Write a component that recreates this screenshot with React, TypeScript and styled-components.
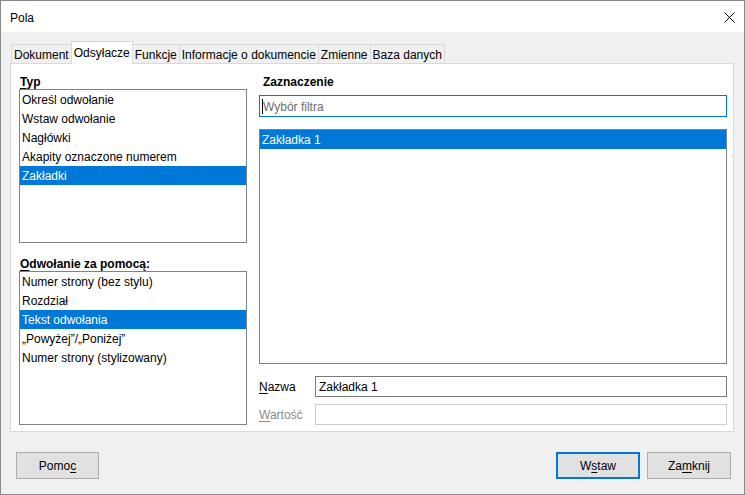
import styled, { createGlobalStyle } from "styled-components";

const Global = createGlobalStyle`
  html, body {
    margin: 0;
    padding: 0;
    background: #ffffff;
  }
  * {
    box-sizing: border-box;
  }
  body {
    font-family: "Liberation Sans", Arial, sans-serif;
    font-size: 12px;
    color: #000;
  }
`;

const Window = styled.div`
  width: 745px;
  height: 495px;
  border: 1px solid #8a8a8a;
  display: flex;
  flex-direction: column;
  background: #f0f0f0;
`;

const TitleBar = styled.div`
  height: 31px;
  flex: 0 0 31px;
  background: #fff;
  display: flex;
  align-items: center;
  justify-content: space-between;
  padding: 2px 9px 0 9px;
  font-size: 12px;
`;

const CloseIcon = styled.svg`
  width: 11px;
  height: 11px;
  margin-top: -1px;
`;

const Body = styled.div`
  flex: 1;
  display: flex;
  flex-direction: column;
  padding: 9px 10px 0 9px;
`;

const TabStrip = styled.div`
  display: flex;
  align-items: flex-end;
  height: 22px;
  padding-left: 1px;
  position: relative;
  z-index: 1;
`;

const Tab = styled.div<{ $active?: boolean }>`
  height: ${(p) => (p.$active ? "23px" : "19px")};
  margin-bottom: ${(p) => (p.$active ? "-1px" : "0")};
  padding: 0 2px 0 2px;
  margin-right: -1px;
  display: flex;
  align-items: center;
  padding-top: ${(p) => (p.$active ? "0" : "1px")};
  background: ${(p) => (p.$active ? "#fff" : "#f0f0f0")};
  border: 1px solid #d9d9d9;
  border-bottom: none;
  white-space: nowrap;
  position: relative;
  z-index: ${(p) => (p.$active ? 2 : 1)};
`;

const Panel = styled.div`
  height: 369px;
  background: #fff;
  border: 1px solid #d9d9d9;
  display: flex;
  gap: 12px;
  padding: 11px 6px 6px 8px;
`;

const Column = styled.div<{ $width: number }>`
  width: ${(p) => p.$width}px;
  display: flex;
  flex-direction: column;
`;

const GroupLabel = styled.div<{ $indent?: number; $top?: number }>`
  font-weight: bold;
  line-height: 14px;
  height: 14px;
  padding-left: ${(p) => p.$indent ?? 1}px;
  margin-top: ${(p) => p.$top ?? 0}px;
`;

const Mn = styled.span`
  text-decoration: underline;
  text-underline-offset: 2px;
`;

const ListBox = styled.div<{ $height?: number }>`
  border: 1px solid #828282;
  background: #fff;
  height: ${(p) => (p.$height ? `${p.$height}px` : "auto")};
  flex: ${(p) => (p.$height ? "0 0 auto" : "1")};
  overflow: hidden;
`;

const ListItem = styled.div<{ $selected?: boolean }>`
  height: 19px;
  line-height: 18px;
  padding: 1px 0 0 2px;
  white-space: nowrap;
  background: ${(p) => (p.$selected ? "#0078d7" : "transparent")};
  color: ${(p) => (p.$selected ? "#fff" : "#000")};
`;

const FilterBox = styled.div`
  height: 22px;
  margin-top: 6px;
  margin-bottom: 12px;
  border: 1px solid #0078d7;
  display: flex;
  align-items: center;
  padding: 1px 0 0 2px;
  color: #6d6d6d;
`;

const Caret = styled.span`
  width: 1px;
  height: 15px;
  background: #000;
`;

const FieldRow = styled.div<{ $top: number }>`
  display: flex;
  align-items: center;
  height: 21px;
  margin-top: ${(p) => p.$top}px;
`;

const FieldLabel = styled.div<{ $disabled?: boolean }>`
  width: 56px;
  padding-top: 1px;
  color: ${(p) => (p.$disabled ? "#8a8a8a" : "#000")};
`;

const TextField = styled.div<{ $disabled?: boolean }>`
  flex: 1;
  height: 21px;
  border: 1px solid ${(p) => (p.$disabled ? "#cccccc" : "#7a7a7a")};
  display: flex;
  align-items: center;
  padding: 1px 0 0 3px;
  background: #fff;
`;

const ButtonRow = styled.div`
  display: flex;
  align-items: center;
  margin-top: 20px;
  padding: 0 3px 0 6px;
  gap: 7px;
`;

const Spacer = styled.div`
  flex: 1;
`;

const Button = styled.div<{ $default?: boolean; $width: number }>`
  width: ${(p) => p.$width}px;
  height: 27px;
  background: #e1e1e1;
  border: ${(p) => (p.$default ? "2px solid #0078d7" : "1px solid #adadad")};
  display: flex;
  align-items: center;
  justify-content: center;
  padding-top: 1px;
`;

const typItems = [
  "Określ odwołanie",
  "Wstaw odwołanie",
  "Nagłówki",
  "Akapity oznaczone numerem",
  "Zakładki",
];

const refItems = [
  "Numer strony (bez stylu)",
  "Rozdział",
  "Tekst odwołania",
  "„Powyżej”/„Poniżej”",
  "Numer strony (stylizowany)",
];

const tabs = [
  "Dokument",
  "Odsyłacze",
  "Funkcje",
  "Informacje o dokumencie",
  "Zmienne",
  "Baza danych",
];

export default function App() {
  return (
    <>
      <Global />
      <Window>
        <TitleBar>
          <span>Pola</span>
          <CloseIcon viewBox="0 0 11 11">
            <path d="M0.5 0.5 L10.5 10.5 M10.5 0.5 L0.5 10.5" stroke="#000" strokeWidth="1" />
          </CloseIcon>
        </TitleBar>
        <Body>
          <TabStrip>
            {tabs.map((t) => (
              <Tab key={t} $active={t === "Odsyłacze"}>
                {t}
              </Tab>
            ))}
          </TabStrip>
          <Panel>
            <Column $width={228}>
              <GroupLabel>
                <Mn>T</Mn>yp
              </GroupLabel>
              <ListBox $height={154}>
                {typItems.map((t) => (
                  <ListItem key={t} $selected={t === "Zakładki"}>
                    {t}
                  </ListItem>
                ))}
              </ListBox>
              <GroupLabel $top={14}>
                <Mn>O</Mn>dwołanie za pomocą:
              </GroupLabel>
              <ListBox $height={154}>
                {refItems.map((t) => (
                  <ListItem key={t} $selected={t === "Tekst odwołania"}>
                    {t}
                  </ListItem>
                ))}
              </ListBox>
            </Column>
            <Column $width={468}>
              <GroupLabel $indent={4}>Zaznaczenie</GroupLabel>
              <FilterBox>
                <Caret />
                Wybór filtra
              </FilterBox>
              <ListBox>
                <ListItem $selected>Zakładka 1</ListItem>
              </ListBox>
              <FieldRow $top={12}>
                <FieldLabel>
                  <Mn>N</Mn>azwa
                </FieldLabel>
                <TextField>Zakładka 1</TextField>
              </FieldRow>
              <FieldRow $top={7}>
                <FieldLabel $disabled>
                  <Mn>W</Mn>artość
                </FieldLabel>
                <TextField $disabled />
              </FieldRow>
            </Column>
          </Panel>
          <ButtonRow>
            <Button $width={83}>
              Pomo<Mn>c</Mn>
            </Button>
            <Spacer />
            <Button $default $width={84}>
              W<Mn>s</Mn>taw
            </Button>
            <Button $width={84}>
              Za<Mn>m</Mn>knij
            </Button>
          </ButtonRow>
        </Body>
      </Window>
    </>
  );
}
